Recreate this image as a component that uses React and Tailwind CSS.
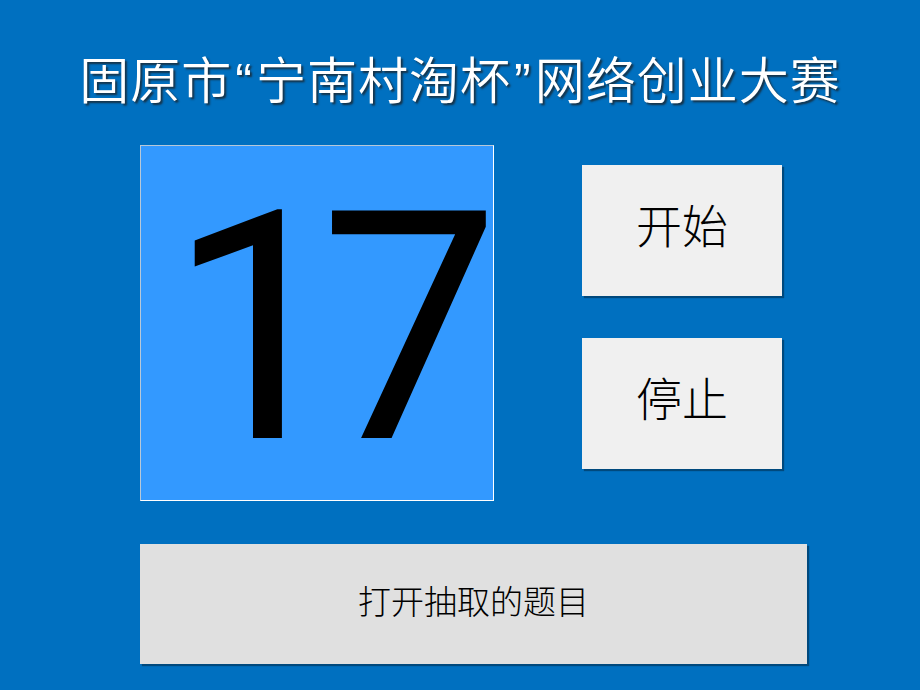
const cjk = "font-['Noto_Sans_CJK_SC','Noto_Sans',sans-serif]";

function PanelButton({ children, className }) {
  return (
    <button
      type="button"
      className={`flex items-center justify-center bg-[#f0f0f0] text-black shadow-[2px_2px_1px_rgba(0,0,0,0.35)] ${cjk} ${className}`}
    >
      {children}
    </button>
  );
}

export default function App() {
  const quote = "font-['Liberation_Sans',Arial,sans-serif] mx-[3px]";

  return (
    <div className="flex h-[690px] w-[920px] flex-col overflow-hidden bg-[#0070c0]">
      <header className="h-[145px] pt-[47px]">
        <h1
          className={`text-center text-[50px] leading-[60px] font-[350] tracking-[1px] text-white [text-shadow:2px_2px_2px_rgba(30,30,30,0.75)] ${cjk}`}
        >
          固原市<span className={quote}>“</span>宁南村淘杯<span className={quote}>”</span>网络创业大赛
        </h1>
      </header>

      <section className="flex pl-[140px]">
        <div className="flex h-[356px] w-[354px] items-start border border-[#b8c8d8] border-r-white border-b-white bg-[#3399ff] pt-[23px] pl-[27px]">
          <span className="font-['Roboto',Arial,sans-serif] text-[320px] leading-[320px] tracking-[-28px] text-black">
            17
          </span>
        </div>

        <div className="ml-[88px] flex flex-col gap-[42px] pt-[20px]">
          <PanelButton className="h-[131px] w-[200px] pb-[14px] text-[46px] font-light">开始</PanelButton>
          <PanelButton className="h-[131px] w-[200px] pb-[14px] text-[46px] font-light">停止</PanelButton>
        </div>
      </section>

      <div className="mt-[43px] pl-[140px]">
        <button
          type="button"
          className={`flex h-[120px] w-[667px] items-center justify-center bg-[#e0e0e0] pb-[6px] text-[33px] font-light text-black shadow-[2px_2px_1px_rgba(0,0,0,0.35)] ${cjk}`}
        >
          打开抽取的题目
        </button>
      </div>
    </div>
  );
}
